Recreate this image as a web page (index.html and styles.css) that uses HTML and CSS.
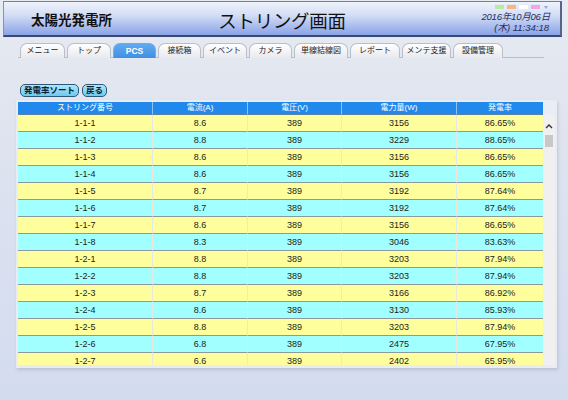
FILE: index.html
```html
<!DOCTYPE html>
<html lang="ja">
<head>
<meta charset="utf-8">
<title>ストリング画面</title>
<link rel="stylesheet" href="styles.css">
</head>
<body>
<header class="hdr">
  <div class="site">太陽光発電所</div>
  <h1 class="title">ストリング画面</h1>
  <div class="meta">
    <div class="swatches">
      <span class="sw sw-green"></span><span class="sw sw-orange"></span><span class="sw sw-white"></span><span class="sw sw-pink"></span><span class="sw-arrow"></span>
    </div>
    <div class="date">2016年10月06日</div>
    <div class="time">(木) 11:34:18</div>
  </div>
</header>

<nav class="tabs">
  <a class="tab w45">メニュー</a>
  <a class="tab w44">トップ</a>
  <a class="tab w43 active">PCS</a>
  <a class="tab w43">接続箱</a>
  <a class="tab w44">イベント</a>
  <a class="tab w43">カメラ</a>
  <a class="tab w54">単線結線図</a>
  <a class="tab w50">レポート</a>
  <a class="tab w49">メンテ支援</a>
  <a class="tab w50">設備管理</a>
</nav>

<div class="actions">
  <button class="btn">発電率ソート</button>
  <button class="btn">戻る</button>
</div>

<section class="frame">
  <div class="scroll">
    <table class="grid">
      <colgroup>
        <col class="c1"><col class="c2"><col class="c3"><col class="c4"><col class="c5">
      </colgroup>
      <thead>
        <tr><th>ストリング番号</th><th>電流(A)</th><th>電圧(V)</th><th>電力量(W)</th><th>発電率</th></tr>
      </thead>
      <tbody>
        <tr><td>1-1-1</td><td>8.6</td><td>389</td><td>3156</td><td>86.65%</td></tr>
        <tr><td>1-1-2</td><td>8.8</td><td>389</td><td>3229</td><td>88.65%</td></tr>
        <tr><td>1-1-3</td><td>8.6</td><td>389</td><td>3156</td><td>86.65%</td></tr>
        <tr><td>1-1-4</td><td>8.6</td><td>389</td><td>3156</td><td>86.65%</td></tr>
        <tr><td>1-1-5</td><td>8.7</td><td>389</td><td>3192</td><td>87.64%</td></tr>
        <tr><td>1-1-6</td><td>8.7</td><td>389</td><td>3192</td><td>87.64%</td></tr>
        <tr><td>1-1-7</td><td>8.6</td><td>389</td><td>3156</td><td>86.65%</td></tr>
        <tr><td>1-1-8</td><td>8.3</td><td>389</td><td>3046</td><td>83.63%</td></tr>
        <tr><td>1-2-1</td><td>8.8</td><td>389</td><td>3203</td><td>87.94%</td></tr>
        <tr><td>1-2-2</td><td>8.8</td><td>389</td><td>3203</td><td>87.94%</td></tr>
        <tr><td>1-2-3</td><td>8.7</td><td>389</td><td>3166</td><td>86.92%</td></tr>
        <tr><td>1-2-4</td><td>8.6</td><td>389</td><td>3130</td><td>85.93%</td></tr>
        <tr><td>1-2-5</td><td>8.8</td><td>389</td><td>3203</td><td>87.94%</td></tr>
        <tr><td>1-2-6</td><td>6.8</td><td>389</td><td>2475</td><td>67.95%</td></tr>
        <tr><td>1-2-7</td><td>6.6</td><td>389</td><td>2402</td><td>65.95%</td></tr>
      </tbody>
    </table>
  </div>
  <div class="sbar">
    <div class="sbar-head"></div>
    <div class="sbar-track">
      <svg class="sbar-up" width="8" height="6" viewBox="0 0 8 6"><path d="M1 5 L4 2 L7 5" fill="none" stroke="#333" stroke-width="1.4"/></svg>
      <div class="sbar-thumb"></div>
    </div>
  </div>
</section>
</body>
</html>
```

FILE: styles.css
```css
html, body {
  margin: 0;
  padding: 0;
}
body {
  width: 568px;
  height: 400px;
  overflow: hidden;
  font-family: "Liberation Sans", "Noto Sans CJK JP", sans-serif;
  background: linear-gradient(to bottom, #e7ebf2 0px, #dfe4ef 120px, #d3dbef 400px);
  color: #222;
}

/* header */
.hdr {
  margin: 1px 6px 0 3px;
  height: 33px;
  border-top: 1px solid #7d7f86;
  border-left: 1px solid #8792ad;
  border-right: 2px solid #56648a;
  border-bottom: 2px solid #3a4770;
  background: linear-gradient(to bottom, #f0f3fb 0%, #d3ddf5 40%, #a2b6ec 80%, #8aa4e6 100%);
  display: grid;
  grid-template-columns: 1fr auto 1fr;
  align-items: center;
}
.site {
  padding-left: 27px;
  font-size: 13.5px;
  font-weight: bold;
  color: #111;
  padding-top: 1px;
}
.title {
  margin: 0;
  font-size: 18.5px;
  font-weight: normal;
  color: #111;
  letter-spacing: -0.3px;
  padding-top: 3px;
}
.meta {
  justify-self: end;
  padding-right: 10px;
  display: flex;
  flex-direction: column;
  align-items: flex-end;
  font-style: italic;
  font-size: 9.5px;
  color: #1c2d5e;
  line-height: 11px;
}
.swatches {
  display: flex;
  align-items: center;
  gap: 1px;
  height: 6px;
  margin-bottom: 1px;
  margin-right: 2px;
}
.sw {
  width: 9px;
  height: 4px;
  border: 1px solid #e4eaf7;
}
.sw-green { background: #b6ec9c; }
.sw-orange { background: #f7b880; }
.sw-white { background: #ffffff; }
.sw-pink { background: #f0a6e0; }
.sw-arrow {
  width: 0;
  height: 0;
  margin-left: 2px;
  border-left: 2px solid transparent;
  border-right: 2px solid transparent;
  border-top: 3px solid #8eaae6;
}
.date { letter-spacing: -0.2px; }
.time { padding-right: 1px; }

/* tabs */
.tabs {
  margin: 6px 0 0 18px;
  width: 526px;
  padding-left: 2px;
  box-sizing: border-box;
  display: flex;
  gap: 2px;
  border-bottom: 1px solid #a7bfea;
  height: 15px;
}
.tab {
  box-sizing: border-box;
  height: 15px;
  border: 1px solid #b9bec8;
  border-bottom: none;
  border-radius: 7px 7px 0 0;
  background: linear-gradient(to bottom, #ffffff, #e7e9ee);
  font-size: 8px;
  line-height: 14px;
  text-align: center;
  color: #222;
}
.tab.active {
  background: linear-gradient(to bottom, #5eaaf2, #418fe2);
  border-color: #73a8e6;
  color: #fff;
  font-weight: bold;
  font-size: 8.5px;
}
.w43 { width: 43px; }
.w44 { width: 44px; }
.w45 { width: 45px; }
.w49 { width: 49px; }
.w50 { width: 50px; }
.w54 { width: 54px; }

/* buttons */
.actions {
  margin: 26px 0 0 20px;
  display: flex;
  gap: 3px;
  height: 13px;
}
.btn {
  box-sizing: border-box;
  height: 13px;
  padding: 0 3px;
  border: 1px solid #2d5878;
  border-radius: 5px;
  background: linear-gradient(to bottom, #aee6fb, #6ccaef);
  font-family: "Liberation Sans", "Noto Sans CJK JP", sans-serif;
  font-size: 8.5px;
  line-height: 11px;
  color: #0c1a2e;
  font-weight: bold;
}

/* table frame */
.frame {
  margin: 3px 0 0 16px;
  width: 541px;
  height: 268px;
  box-sizing: border-box;
  padding: 2px 2px 3px 2px;
  background: #e9edf3;
  box-shadow: 1px 2px 3px rgba(60, 70, 100, 0.18);
  display: flex;
}
.scroll {
  width: 525px;
  height: 263px;
  overflow: hidden;
}
.grid {
  width: 525px;
  table-layout: fixed;
  border-collapse: separate;
  border-spacing: 0;
  font-size: 9px;
}
.c1 { width: 135px; }
.c2 { width: 95px; }
.c3 { width: 94px; }
.c4 { width: 115px; }
.c5 { width: 86px; }
.grid th {
  height: 12px;
  padding: 0;
  background: #2189ec;
  color: #fff;
  font-weight: normal;
  font-size: 8px;
  line-height: 12px;
  border-right: 1px solid #8fc2f2;
  border-bottom: 1px solid #5f7f9e;
}
.grid th:last-child,
.grid td:last-child { border-right: none; }
.grid td {
  height: 16px;
  padding: 0;
  text-align: center;
  line-height: 16px;
  color: #1c1c1c;
  border-right: 1px solid #e8e8e0;
  border-bottom: 1px solid #8c9a9c;
}
.grid tbody tr:nth-child(odd) td { background: #fffe9c; }
.grid tbody tr:nth-child(even) td { background: #a2ffff; }

/* fake scrollbar */
.sbar {
  width: 12px;
  display: flex;
  flex-direction: column;
}
.sbar-head {
  height: 13px;
  background: #e9eef6;
}
.sbar-track {
  flex: 1;
  background: #f0f0f0;
  display: flex;
  flex-direction: column;
  align-items: center;
  padding-top: 8px;
}
.sbar-up { display: block; }
.sbar-thumb {
  margin-top: 6px;
  width: 8px;
  height: 12px;
  background: #c8c8c8;
}
```
